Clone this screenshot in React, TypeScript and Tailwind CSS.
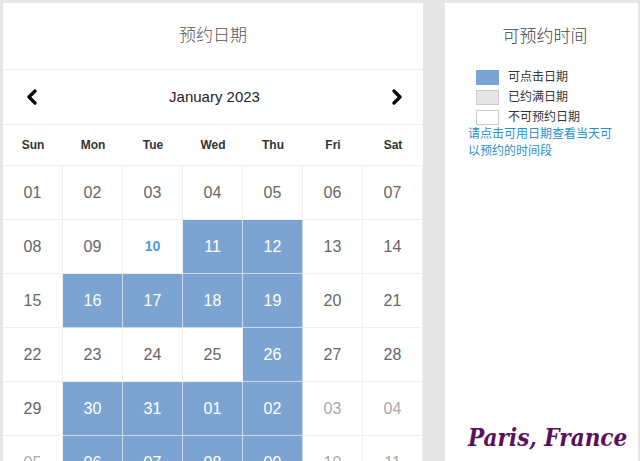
import React from "react";

type Cell = { d: string; kind: "normal" | "blue" | "today" | "other" };

const rows: Cell[][] = [
  ["01", "02", "03", "04", "05", "06", "07"].map((d) => ({ d, kind: "normal" as const })),
  [
    { d: "08", kind: "normal" },
    { d: "09", kind: "normal" },
    { d: "10", kind: "today" },
    { d: "11", kind: "blue" },
    { d: "12", kind: "blue" },
    { d: "13", kind: "normal" },
    { d: "14", kind: "normal" },
  ],
  [
    { d: "15", kind: "normal" },
    { d: "16", kind: "blue" },
    { d: "17", kind: "blue" },
    { d: "18", kind: "blue" },
    { d: "19", kind: "blue" },
    { d: "20", kind: "normal" },
    { d: "21", kind: "normal" },
  ],
  [
    { d: "22", kind: "normal" },
    { d: "23", kind: "normal" },
    { d: "24", kind: "normal" },
    { d: "25", kind: "normal" },
    { d: "26", kind: "blue" },
    { d: "27", kind: "normal" },
    { d: "28", kind: "normal" },
  ],
  [
    { d: "29", kind: "normal" },
    { d: "30", kind: "blue" },
    { d: "31", kind: "blue" },
    { d: "01", kind: "blue" },
    { d: "02", kind: "blue" },
    { d: "03", kind: "other" },
    { d: "04", kind: "other" },
  ],
  [
    { d: "05", kind: "other" },
    { d: "06", kind: "blue" },
    { d: "07", kind: "blue" },
    { d: "08", kind: "blue" },
    { d: "09", kind: "blue" },
    { d: "10", kind: "other" },
    { d: "11", kind: "other" },
  ],
];

const days = ["Sun", "Mon", "Tue", "Wed", "Thu", "Fri", "Sat"];

function DayCell({ c }: { c: Cell }) {
  if (c.kind === "blue") {
    return (
      <div className="h-[54px] flex items-center justify-center bg-[#7ba4d2] text-white text-[16px] border-r border-b border-[#c9dbee]">
        {c.d}
      </div>
    );
  }
  if (c.kind === "today") {
    return (
      <div className="h-[54px] flex items-center justify-center text-[#4a9ad8] font-bold text-[14px] border-r border-b border-[#efefef]">
        {c.d}
      </div>
    );
  }
  return (
    <div
      className={
        "h-[54px] flex items-center justify-center text-[16px] border-r border-b border-[#efefef] " +
        (c.kind === "other" ? "text-[#aaaaaa]" : "text-[#666666]")
      }
    >
      {c.d}
    </div>
  );
}

export default function App() {
  return (
    <div
      className="w-[640px] h-[461px] overflow-hidden bg-[#e6e6e6] flex items-start gap-[22px] pl-[3px] pt-[3px]"
      style={{ fontFamily: '"Liberation Sans", "Noto Sans CJK SC", Arial, sans-serif' }}
    >
      <div className="w-[420px] bg-white flex flex-col shrink-0 h-[480px]">
        <div className="h-[67px] shrink-0 flex items-center justify-center border-b border-[#eeeeee] text-[17px] text-[#555555] font-light">
          预约日期
        </div>
        <div className="h-[55px] shrink-0 flex items-center justify-between pl-[23px] pr-[20px] border-b border-[#eeeeee]">
          <svg width="12" height="16" viewBox="0 0 12 16">
            <path d="M9 2 L3 8 L9 14" stroke="#000" strokeWidth="3.2" fill="none" strokeLinecap="round" strokeLinejoin="round" />
          </svg>
          <span className="text-[15px] text-[#222222]">January 2023</span>
          <svg width="12" height="16" viewBox="0 0 12 16">
            <path d="M3 2 L9 8 L3 14" stroke="#000" strokeWidth="3.2" fill="none" strokeLinecap="round" strokeLinejoin="round" />
          </svg>
        </div>
        <div className="grid grid-cols-7 h-[41px] shrink-0 border-b border-[#eeeeee]">
          {days.map((d) => (
            <div key={d} className="flex items-center justify-center text-[12px] font-bold text-[#333333]">
              {d}
            </div>
          ))}
        </div>
        <div className="grid grid-cols-7 shrink-0">
          {rows.flat().map((c, i) => (
            <DayCell key={i} c={c} />
          ))}
        </div>
      </div>
      <div className="w-[193px] bg-white h-[480px] shrink-0 flex flex-col pl-[23px] pr-[6px]">
        <div className="h-[67px] shrink-0 flex items-center justify-center text-[17px] text-[#444444] font-light pr-[10px]">
          可预约时间
        </div>
        <div className="flex flex-col gap-[5px] pl-[8px] pt-0 shrink-0">
          <div className="flex items-center gap-[9px]">
            <div className="w-[23px] h-[15px] bg-[#7ba4d2] border border-[#7ba4d2]" />
            <span className="text-[12px] leading-[15px] text-[#333333]">可点击日期</span>
          </div>
          <div className="flex items-center gap-[9px]">
            <div className="w-[23px] h-[15px] bg-[#e6e6e6] border border-[#cccccc]" />
            <span className="text-[12px] leading-[15px] text-[#333333]">已约满日期</span>
          </div>
          <div className="flex items-center gap-[9px]">
            <div className="w-[23px] h-[15px] bg-white border border-[#cccccc]" />
            <span className="text-[12px] leading-[15px] text-[#333333]">不可预约日期</span>
          </div>
        </div>
        <div className="text-[12px] leading-[17px] text-[#2a8fcf] mt-[1px] w-[150px] shrink-0">
          请点击可用日期查看当天可以预约的时间段
        </div>
        <div className="mt-[264px] whitespace-nowrap shrink-0">
          <span
            className="text-[24px] font-bold italic text-[#5c0f5c] leading-[28px]"
            style={{ fontFamily: '"DejaVu Serif", "Liberation Serif", serif', fontStretch: "condensed" }}
          >
            Paris, France
          </span>
        </div>
      </div>
    </div>
  );
}
